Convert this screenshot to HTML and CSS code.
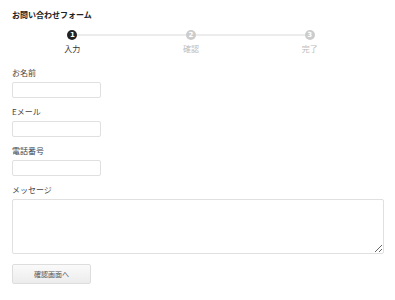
FILE: index.html
```html
<!DOCTYPE html>
<html lang="ja">
<head>
  <meta charset="UTF-8">
  <title>お問い合わせフォーム</title>
  <link rel="stylesheet" href="styles.css">
</head>
<body>
<h1 class="title">お問い合わせフォーム</h1>

<ol class="steps">
  <li class="step active">
    <div class="track"><span class="bar none"></span><span class="dot">1</span><span class="bar"></span></div>
    <div class="step-label">入力</div>
  </li>
  <li class="step">
    <div class="track"><span class="bar"></span><span class="dot">2</span><span class="bar"></span></div>
    <div class="step-label">確認</div>
  </li>
  <li class="step">
    <div class="track"><span class="bar"></span><span class="dot">3</span><span class="bar none"></span></div>
    <div class="step-label">完了</div>
  </li>
</ol>

<form class="contact-form">
  <div class="field">
    <label for="name">お名前</label>
    <input type="text" id="name" class="input">
  </div>
  <div class="field">
    <label for="email">Eメール</label>
    <input type="text" id="email" class="input">
  </div>
  <div class="field">
    <label for="tel">電話番号</label>
    <input type="text" id="tel" class="input">
  </div>
  <div class="field">
    <label for="message">メッセージ</label>
    <textarea id="message" class="textarea"></textarea>
  </div>
  <button type="button" class="confirm-btn">確認画面へ</button>
</form>
</body>
</html>
```

FILE: styles.css
```css
body {
  margin: 0;
  padding: 9px 12px 0 12px;
  font-family: "Noto Sans CJK JP", "Noto Sans", sans-serif;
  color: #333;
  background-color: #fff;
}
.title {
  font-size: 8px;
  font-weight: bold;
  line-height: 12px;
  margin: 0;
  color: #222;
}
.steps {
  list-style: none;
  margin: 9px 0 0 1px;
  padding: 0;
  display: flex;
  width: 356px;
}
.step {
  flex: 1;
  text-align: center;
}
.track {
  display: flex;
  align-items: center;
  height: 10px;
}
.bar {
  flex: 1;
  height: 2px;
  background-color: #ececec;
}
.bar.none {
  background-color: transparent;
}
.dot {
  width: 10px;
  height: 10px;
  border-radius: 50%;
  background-color: #ccc;
  color: #fff;
  font-size: 7px;
  font-weight: bold;
  line-height: 10px;
  text-align: center;
  font-family: "DejaVu Sans", sans-serif;
}
.step-label {
  font-size: 8px;
  line-height: 10px;
  margin-top: 4px;
  color: #bbb;
}
.step.active .dot {
  background-color: #222;
}
.step.active .step-label {
  color: #333;
}
.contact-form {
  margin-top: 13px;
}
.field {
  margin-bottom: 8px;
}
.field label {
  display: block;
  font-size: 8px;
  line-height: 12px;
  margin-bottom: 3px;
  color: #444;
}
.input {
  display: block;
  box-sizing: border-box;
  width: 89px;
  height: 16px;
  border: 1px solid #e0e0e0;
  border-radius: 2px;
  padding: 0 3px;
  margin: 0;
}
.textarea {
  display: block;
  box-sizing: border-box;
  width: 372px;
  height: 55px;
  border: 1px solid #e0e0e0;
  border-radius: 2px;
  margin: 0;
}
.confirm-btn {
  display: block;
  margin-top: 10px;
  width: 79px;
  height: 20px;
  border: 1px solid #ddd;
  border-radius: 2px;
  background: linear-gradient(#fafafa, #ececec);
  color: #555;
  font-family: "Noto Sans CJK JP", sans-serif;
  font-size: 7px;
  padding: 0;
}
```
